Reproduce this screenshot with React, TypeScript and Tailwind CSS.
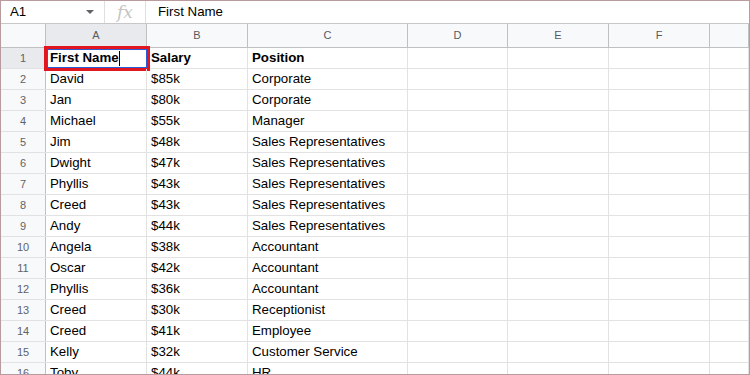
import React from 'react';

const rows: [string, string, string][] = [
  ['First Name', 'Salary', 'Position'],
  ['David', '$85k', 'Corporate'],
  ['Jan', '$80k', 'Corporate'],
  ['Michael', '$55k', 'Manager'],
  ['Jim', '$48k', 'Sales Representatives'],
  ['Dwight', '$47k', 'Sales Representatives'],
  ['Phyllis', '$43k', 'Sales Representatives'],
  ['Creed', '$43k', 'Sales Representatives'],
  ['Andy', '$44k', 'Sales Representatives'],
  ['Angela', '$38k', 'Accountant'],
  ['Oscar', '$42k', 'Accountant'],
  ['Phyllis', '$36k', 'Accountant'],
  ['Creed', '$30k', 'Receptionist'],
  ['Creed', '$41k', 'Employee'],
  ['Kelly', '$32k', 'Customer Service'],
  ['Toby', '$44k', 'HR'],
];

const cols = [
  { label: 'A', w: 'w-[101px]' },
  { label: 'B', w: 'w-[101px]' },
  { label: 'C', w: 'w-[160px]' },
  { label: 'D', w: 'w-[100px]' },
  { label: 'E', w: 'w-[101px]' },
  { label: 'F', w: 'w-[101px]' },
  { label: '', w: 'flex-1' },
];

export default function App() {
  return (
    <div className="w-[750px] h-[375px] overflow-hidden bg-white border border-[#b99a9e] font-['Liberation_Sans',Arial,sans-serif] text-[13.3px] text-black">
      {/* formula bar */}
      <div className="flex items-center h-[23px] border-b border-[#c7c7c7]">
        <div className="flex items-center w-[104px] h-full pl-[9px] pr-[9px] border-r border-[#e0e0e0]">
          <span className="flex-1">A1</span>
          <svg width="8" height="4" viewBox="0 0 8 4" className="mr-[1px]">
            <path d="M0 0h8L4 4z" fill="#5f6368" />
          </svg>
        </div>
        <div className="flex items-center justify-center w-[41px] h-full border-r border-[#e0e0e0] text-[#c4c4c4] italic font-['DejaVu_Serif',serif] text-[17px] leading-none">
          fx
        </div>
        <div className="pl-[12px]">First Name</div>
      </div>

      {/* column headers */}
      <div className="flex h-[24px] bg-[#f8f9fa] border-b border-[#c0c0c0] text-[11px] text-[#575a5e]">
        <div className="w-[45px] shrink-0 border-r border-[#c0c0c0]" />
        {cols.map((c, i) => (
          <div
            key={i}
            className={`${c.w} shrink-0 flex items-center justify-center border-r border-[#c0c0c0] ${c.label === 'A' ? 'bg-[#e8eaed]' : ''}`}
          >
            {c.label}
          </div>
        ))}
      </div>

      {/* grid rows */}
      {rows.map((r, ri) => (
        <div key={ri} className="flex h-[21px] border-b border-[#e2e2e3]">
          <div
            className={`w-[45px] shrink-0 flex items-center justify-center text-[11px] text-[#5f6368] border-r border-[#c0c0c0] ${ri === 0 ? 'bg-[#e8eaed]' : 'bg-[#f8f9fa]'}`}
          >
            {ri + 1}
          </div>
          {cols.map((c, ci) => {
            const text = ci < 3 ? r[ci] : '';
            const selected = ri === 0 && ci === 0;
            return (
              <div
                key={ci}
                className={`${c.w} shrink-0 relative flex items-center px-[4px] border-r border-[#e2e2e3] whitespace-nowrap ${ri === 0 ? 'font-bold' : ''}`}
              >
                {text}
                {selected && (
                  <>
                    <span className="w-px h-[15px] bg-black" />
                    <div className="absolute left-[-2px] top-[-2px] right-[-4px] bottom-[-3px] border-[3px] border-[#e0171f] pointer-events-none">
                      <div className="w-full h-full border border-[#2a5bd7]" />
                    </div>
                  </>
                )}
              </div>
            );
          })}
        </div>
      ))}
    </div>
  );
}
